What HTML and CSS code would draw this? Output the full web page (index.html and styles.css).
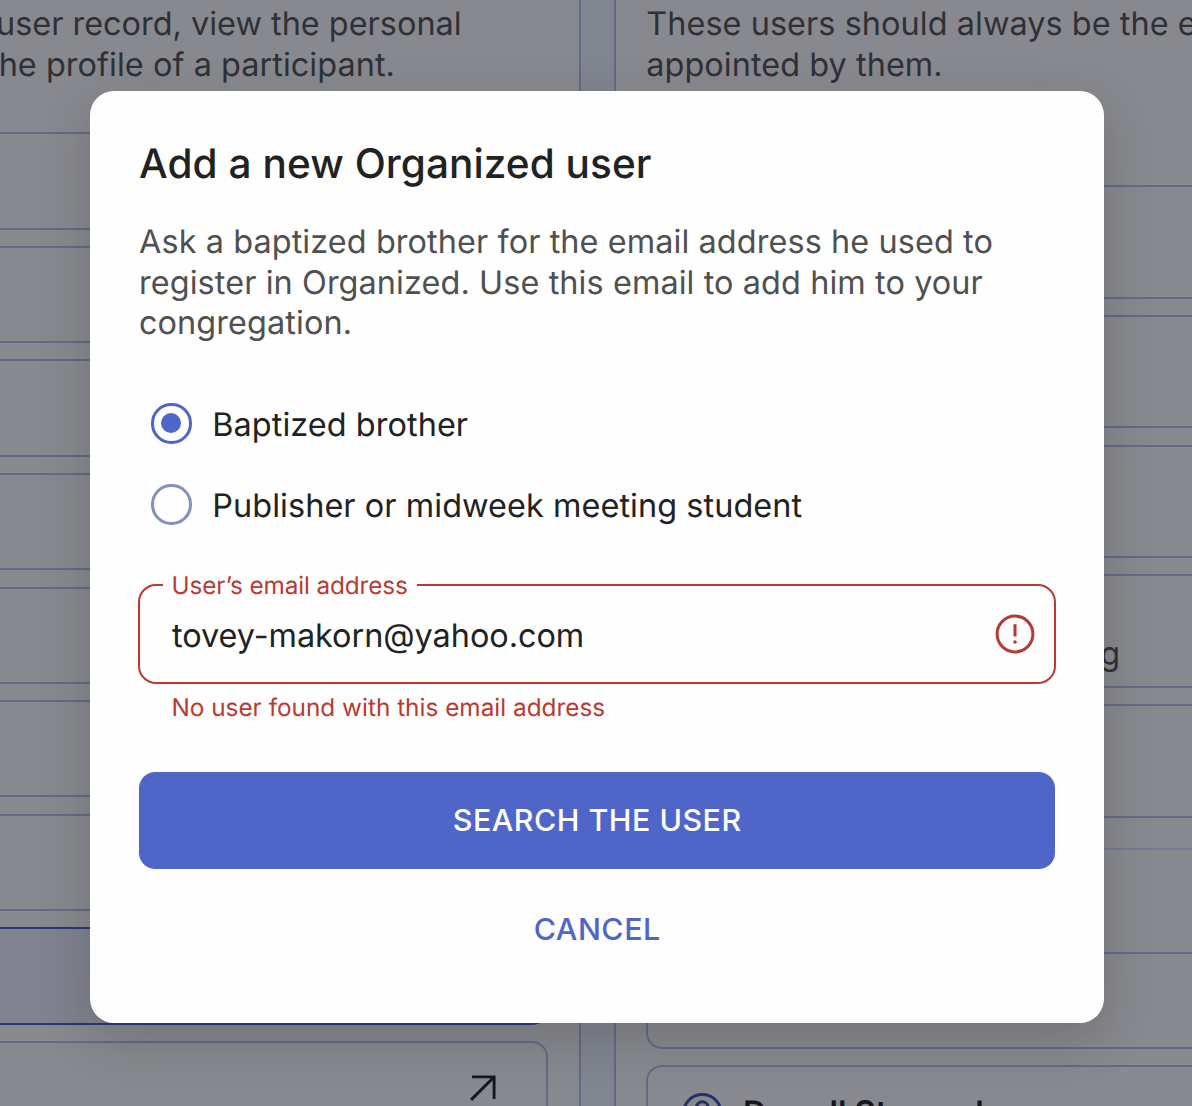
FILE: index.html
```html
<!DOCTYPE html>
<html lang="en">
<head>
<meta charset="utf-8">
<title>Add a new Organized user</title>
<link rel="stylesheet" href="styles.css">
</head>
<body>
<main class="page">
  <section class="panel panel-left">
    <div class="intro">
      <div class="intro-line line-user">user record, view the personal</div>
      <div class="intro-line line-profile">the profile of a participant.</div>
    </div>
    <div class="cards">
      <div class="card"></div>
      <div class="card"></div>
      <div class="card"></div>
      <div class="card"></div>
      <div class="card"></div>
      <div class="card"></div>
      <div class="card"></div>
      <div class="card card-active"></div>
      <div class="card card-link">
        <svg class="arrow" width="26" height="26" viewBox="0 0 26 26" fill="none" stroke="#17181f" stroke-width="2.9"><path d="M2 1.9H24.1V24M24 2L1.1 24.9"/></svg>
      </div>
    </div>
  </section>
  <section class="panel panel-right">
    <div class="intro">
      <div class="intro-line">These users should always be the elders or</div>
      <div class="intro-line">appointed by them.</div>
    </div>
    <div class="cards cards-tall">
      <div class="card"></div>
      <div class="card"></div>
      <div class="card"></div>
      <div class="card card-note">g</div>
      <div class="card"></div>
    </div>
    <hr class="divider">
    <div class="cards">
      <div class="card"></div>
      <div class="card card-person">
        <svg width="48.6" height="48.6" viewBox="0 0 24 24" fill="none" stroke="#263069" stroke-width="1.5"><circle cx="12" cy="12" r="9.3"/><circle cx="12" cy="9.3" r="3"/><path d="M5.8 18.4c3.6-3.2 8.8-3.2 12.4 0"/></svg>
        <span>Darrell Steward</span>
      </div>
    </div>
  </section>
</main>

<div class="overlay">
  <div class="dialog" role="dialog" aria-labelledby="title">
    <h1 class="title" id="title">Add a new Organized user</h1>
    <p class="description">Ask a baptized brother for the email address he used to<br>register in Organized. Use this email to add him to your<br>congregation.</p>
    <div class="options">
      <div class="option"><span class="radio radio-checked"></span><span class="option-text">Baptized brother</span></div>
      <div class="option"><span class="radio"></span><span class="option-text">Publisher or midweek meeting student</span></div>
    </div>
    <fieldset class="field">
      <legend class="field-label">User’s email address</legend>
      <div class="field-row">
        <span class="field-value">tovey-makorn@yahoo.com</span>
        <svg width="40" height="40" viewBox="0 0 40 40" fill="none" stroke="#b93a30"><circle cx="20" cy="20" r="17.9" stroke-width="3"/><path d="M20 10.2V22.5" stroke-width="3"/><circle cx="20" cy="28" r="1.8" fill="#b93a30" stroke="none"/></svg>
      </div>
    </fieldset>
    <div class="helper">No user found with this email address</div>
    <button class="button button-primary">SEARCH THE USER</button>
    <button class="button button-text">CANCEL</button>
  </div>
</div>
</body>
</html>
```
FILE: styles.css
```css
* { box-sizing: border-box; }

body {
  margin: 0;
  width: 1192px;
  height: 1106px;
  overflow: hidden;
  position: relative;
  font-family: Inter, "Liberation Sans", sans-serif;
  font-size: 32.43px;
  line-height: 40.54px;
  text-rendering: geometricPrecision;
  color: #222222;
  background: #81858f;
}

.page {
  display: flex;
  gap: 33px;
  height: 1106px;
  overflow: hidden;
}

.panel {
  flex: none;
  background: #88898e;
  padding-top: 4px;
}

.panel-left {
  width: 581px;
  border-right: 2px solid #616a88;
  padding-right: 30.7px;
}

.panel-right {
  width: 640px;
  border-left: 2px solid #616a88;
  padding-left: 30.3px;
}

.intro { color: #303136; white-space: nowrap; }
.panel-left .intro { height: 128.4px; overflow: hidden; }
.panel-right .intro { height: 181px; letter-spacing: 0.05px; }
.line-user { margin-left: -4px; }
.line-profile { margin-left: -12px; letter-spacing: 0.04px; }

.cards {
  display: flex;
  flex-direction: column;
  gap: 16.25px;
}

.card {
  flex: none;
  height: 97.3px;
  border: 2px solid #616a88;
  border-radius: 16px;
}

.panel-left .card { margin-left: -40px; }
.cards-tall .card { height: 113.5px; }

.card-active {
  background: #80828f;
  border-color: #2c3677;
}

.card-link {
  display: flex;
  justify-content: flex-end;
  padding: 32px 50px 0 0;
}

.card-note {
  color: #303136;
  padding: 58px 0 0 452px;
}

.card-person {
  display: flex;
  align-items: center;
  gap: 16px;
  padding-left: 30px;
  color: #16171e;
  font-weight: 600;
  white-space: nowrap;
}

.divider {
  height: 2px;
  margin: 30.5px 0 101.5px;
  border: 0;
  background: #747c94;
}

.overlay {
  position: absolute;
  inset: 0;
  padding: 91px 88px 83px 90.4px;
}

.dialog {
  display: flex;
  flex-direction: column;
  height: 932.3px;
  padding: 48.6px;
  background: #fefefe;
  border-radius: 24.3px;
  box-shadow: 0 16px 49px rgba(28, 28, 28, 0.2);
}

.dialog > * { flex: none; }

.title {
  margin: 0;
  font-size: 40.54px;
  line-height: 48.6px;
  font-weight: 500;
  letter-spacing: 0.06px;
}

.description {
  margin: 34.2px 0 0;
  color: #505050;
  letter-spacing: 0.08px;
  white-space: nowrap;
}

.options {
  display: flex;
  flex-direction: column;
  gap: 40.5px;
  margin: 59.2px 0 0 12.2px;
  letter-spacing: 0.06px;
}

.option {
  display: flex;
  align-items: center;
  gap: 20.6px;
}

.option-text { padding-top: 1.5px; margin-bottom: -1.5px; }

.radio {
  display: grid;
  place-items: center;
  width: 40.5px;
  height: 40.5px;
  border: 3px solid #8391bd;
  border-radius: 50%;
}

.radio-checked { border-color: #5065c8; }

.radio-checked::before {
  content: "";
  width: 20px;
  height: 20px;
  border-radius: 50%;
  background: #5065c8;
}

.field {
  height: 113.4px;
  width: 918px;
  min-width: 0;
  margin: 45.6px 0 0 -1px;
  padding: 0 19px 0 23px;
  border: 2px solid #b93a30;
  border-radius: 18px;
}

.field-label {
  padding: 0 9px 0 8.5px;
  font-size: 24.32px;
  line-height: 30px;
  letter-spacing: -0.12px;
  color: #b93a30;
}

.field-row {
  display: flex;
  align-items: center;
  justify-content: space-between;
  padding: 12.3px 0 0 9px;
}

.field-value { padding-top: 3px; letter-spacing: -0.04px; }

.helper {
  margin: 7.2px 0 0 32.4px;
  font-size: 24.32px;
  line-height: 32.4px;
  letter-spacing: 0.02px;
  color: #b93a30;
}

.button {
  height: 97.3px;
  border: 0;
  border-radius: 16.2px;
  background: none;
  font: 500 30.4px/40px Inter, "Liberation Sans", sans-serif;
  letter-spacing: 0.5px;
}

.button-primary {
  margin-top: 48.6px;
  padding-bottom: 2px;
  background: #5065c8;
  color: #fefefe;
}

.button-text {
  margin-top: 12.2px;
  padding-bottom: 3px;
  color: #5065c8;
}
```
